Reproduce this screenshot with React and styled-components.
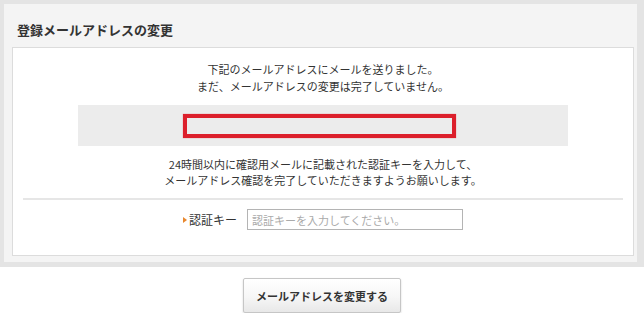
import React from "react";
import styled, { createGlobalStyle } from "styled-components";

const GlobalStyle = createGlobalStyle`
  html, body { margin: 0; padding: 0; background: #ffffff; }
  body {
    font-family: "Noto Sans CJK JP", "Noto Sans", sans-serif;
    color: #333333;
  }
`;

const Page = styled.div`
  width: 644px;
  display: flex;
  flex-direction: column;
  align-items: center;
`;

const Frame = styled.div`
  align-self: stretch;
  background: #e4e4e4;
  padding: 4px 7px 5px 4px;
`;

const Panel = styled.section`
  background: #f4f4f4;
  padding: 0 3px 6px 8px;
`;

const Title = styled.h2`
  margin: 0;
  padding: 17px 0 9px 5px;
  font-size: 13px;
  line-height: 17px;
  font-weight: bold;
  color: #333333;
`;

const Box = styled.div`
  background: #ffffff;
  border: 1px solid #dcdcdc;
  padding: 13px 10px 25px;
  display: flex;
  flex-direction: column;
  align-items: center;
`;

const Message = styled.p`
  margin: ${(p) => p.$mt || 0}px 0 0;
  font-size: 11px;
  line-height: ${(p) => p.$lh || 17}px;
  text-align: center;
  color: #333333;
`;

const AddressBand = styled.div`
  margin-top: 10px;
  width: 490px;
  height: 41px;
  background: #ececec;
  display: flex;
  align-items: center;
  justify-content: center;
`;

const AddressMark = styled.div`
  box-sizing: border-box;
  width: 273px;
  height: 24px;
  margin-left: -7px;
  border: 4px solid #dc1f2b;
  box-shadow: 0 0 1px rgba(220, 31, 43, 0.6);
`;

const Divider = styled.hr`
  align-self: stretch;
  margin: 10px 0 0;
  border: 0;
  height: 2px;
  background: #e6e6e6;
`;

const FieldRow = styled.div`
  margin-top: 9px;
  display: flex;
  align-items: center;
  gap: 10px;
`;

const Label = styled.label`
  display: flex;
  align-items: center;
  gap: 2px;
  font-size: 12px;
  line-height: 16px;
  color: #333333;
`;

const Bullet = styled.span`
  width: 0;
  height: 0;
  border-top: 3px solid transparent;
  border-bottom: 3px solid transparent;
  border-left: 4px solid #e8872e;
`;

const KeyInput = styled.input`
  box-sizing: border-box;
  width: 216px;
  height: 21px;
  margin: 0;
  padding: 0 4px;
  border: 1px solid #b4b4b4;
  font-family: inherit;
  font-size: 11px;
  color: #333333;
  outline: none;
  &::placeholder { color: #aaaaaa; }
`;

const SubmitButton = styled.button`
  margin-top: 11px;
  height: 35px;
  padding: 0 12px;
  border: 1px solid #c6c6c6;
  border-radius: 2px;
  background: linear-gradient(#ffffff, #f6f6f6 55%, #e8e8e8);
  box-shadow: 0 1px 2px rgba(0, 0, 0, 0.18);
  font-family: inherit;
  font-size: 11px;
  font-weight: bold;
  color: #333333;
  cursor: pointer;
`;

export default function App() {
  return (
    <>
      <GlobalStyle />
      <Page>
        <Frame>
          <Panel>
            <Title>登録メールアドレスの変更</Title>
            <Box>
              <Message>
                下記のメールアドレスにメールを送りました。
                <br />
                まだ、メールアドレスの変更は完了していません。
              </Message>
              <AddressBand>
                <AddressMark />
              </AddressBand>
              <Message $mt={10} $lh={16}>
                24時間以内に確認用メールに記載された認証キーを入力して、
                <br />
                メールアドレス確認を完了していただきますようお願いします。
              </Message>
              <Divider />
              <FieldRow>
                <Label htmlFor="authkey">
                  <Bullet />
                  認証キー
                </Label>
                <KeyInput id="authkey" placeholder="認証キーを入力してください。" />
              </FieldRow>
            </Box>
          </Panel>
        </Frame>
        <SubmitButton type="button">メールアドレスを変更する</SubmitButton>
      </Page>
    </>
  );
}
